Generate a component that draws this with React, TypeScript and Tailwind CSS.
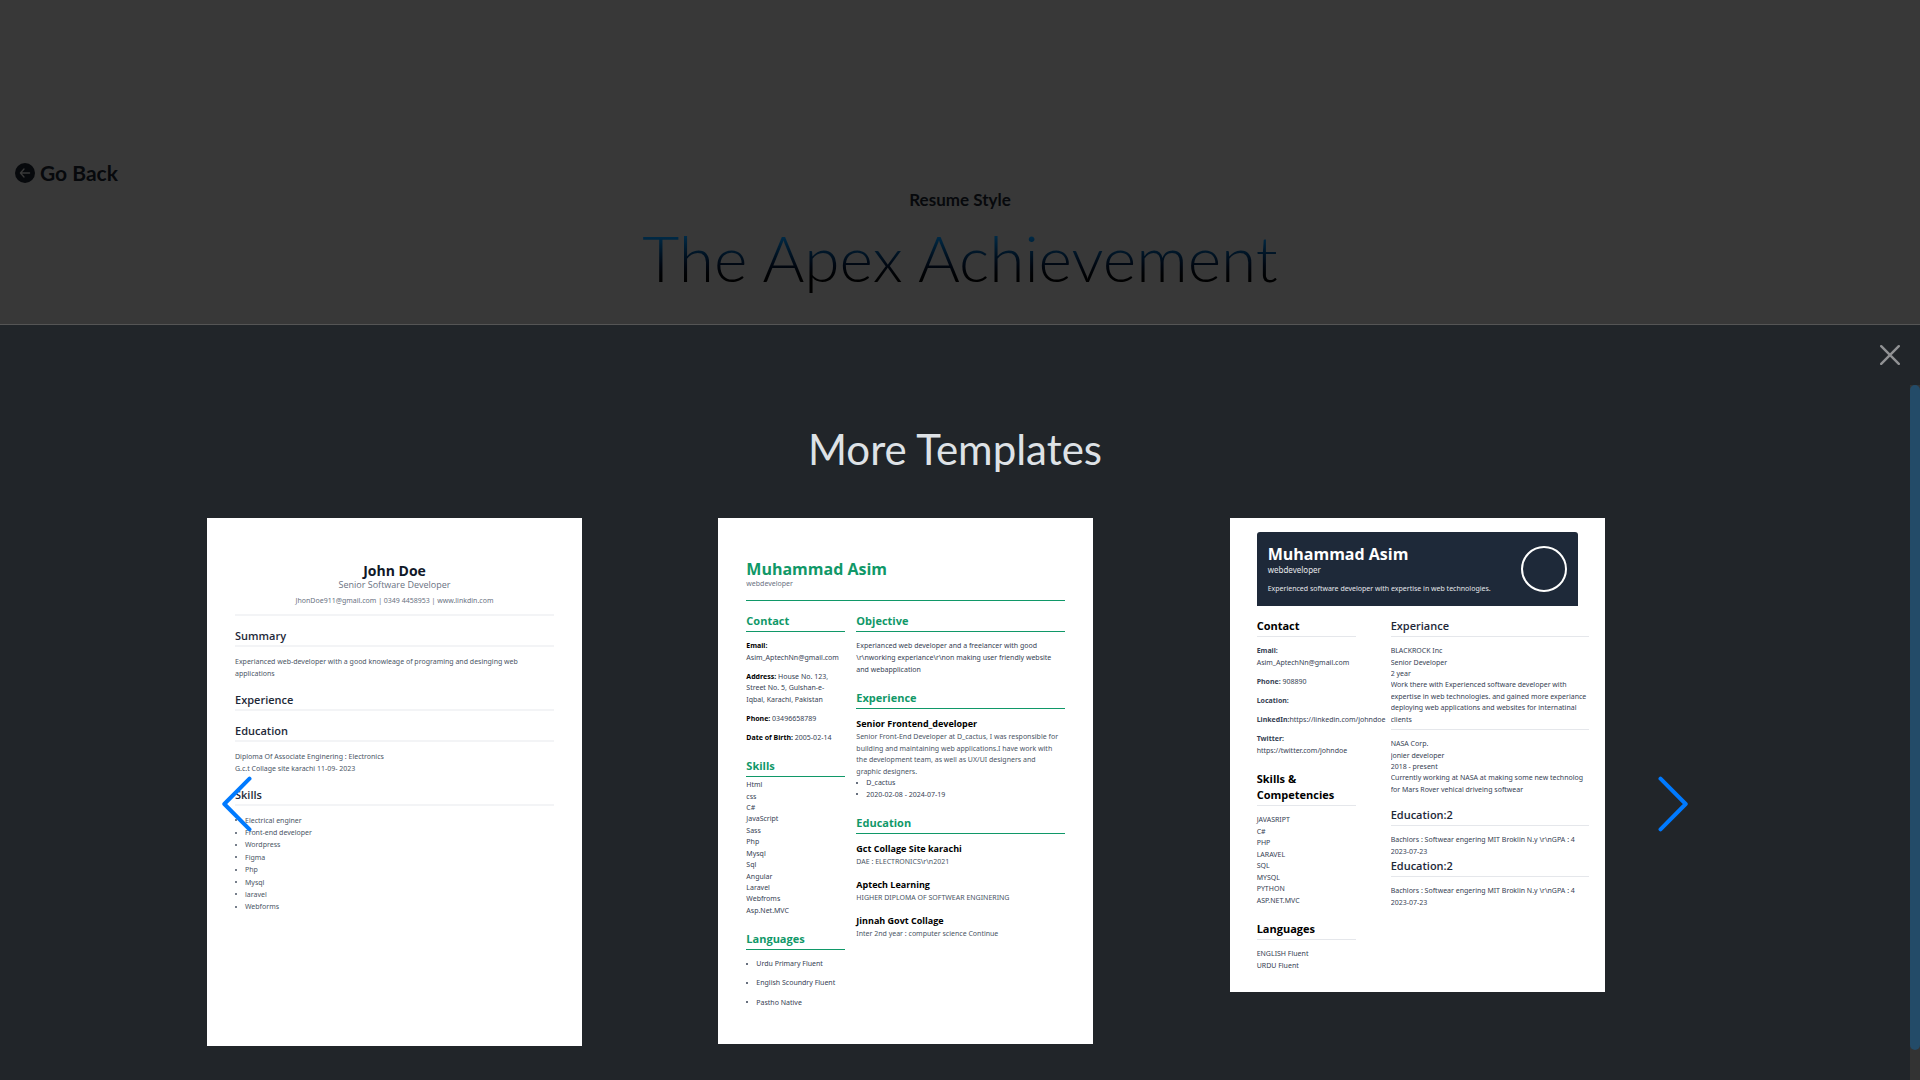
import type { ReactNode } from "react";

function Arrow({ flip }: { flip?: boolean }) {
  return (
    <svg width="32" height="56" viewBox="0 0 32 56" fill="none" aria-hidden="true">
      <path
        d={flip ? "M3.5 2.7 28.7 28 3.5 53.3" : "M28.5 2.7 3.3 28 28.5 53.3"}
        stroke="#007aff"
        strokeWidth="4"
        strokeLinecap="round"
        strokeLinejoin="round"
      />
    </svg>
  );
}

/* A block of equally spaced single lines that share the given height. */
function Lines({ items, className }: { items: ReactNode[]; className: string }) {
  return (
    <div className={`grid auto-rows-fr items-center whitespace-nowrap text-[7px] leading-[11px] ${className}`}>
      {items.map((t, i) => (
        <div key={i}>{t}</div>
      ))}
    </div>
  );
}

function Bullets({ items, className }: { items: string[]; className: string }) {
  return (
    <ul className={`grid auto-rows-fr items-center whitespace-nowrap text-[7px] leading-[11px] ${className}`}>
      {items.map((t) => (
        <li key={t} className="flex items-center gap-2">
          <span className="size-[2px] shrink-0 rounded-full bg-current" />
          {t}
        </li>
      ))}
    </ul>
  );
}

function Heading({ children, className }: { children: ReactNode; className: string }) {
  return <h4 className={`pt-px pb-0.5 font-['Open_Sans',sans-serif] text-[11px] ${className}`}>{children}</h4>;
}

const plainHead = "mt-[11px] border-b-2 border-gray-100 leading-[15px] font-semibold text-gray-800";
const greenHead = "mt-3.5 border-b border-[#109868] leading-[16px] font-bold text-[#109868]";
const blackHead = "mt-3.5 border-b border-gray-200 leading-[16px] font-bold text-black";
const navyHead = "mt-[11px] border-b border-gray-200 leading-[16px] font-semibold text-gray-800";

function ResumeCentered() {
  return (
    <article className="w-full max-w-[375px] bg-white px-7 pt-11 pb-[133px] text-gray-600">
      <header className="border-b-2 border-gray-100 pb-[7px] text-center">
        <h3 className="font-['Open_Sans',sans-serif] text-[14px] leading-[17px] font-bold text-gray-900">John Doe</h3>
        <p className="font-['Open_Sans',sans-serif] text-[9px] leading-[12px] text-gray-500">Senior Software Developer</p>
        <p className="mt-1 text-[7px] leading-[12px] text-gray-500">
          JhonDoe911@gmail.com | 0349 4458953 | www.linkdin.com
        </p>
      </header>
      <Heading className={plainHead}>Summary</Heading>
      <Lines
        className="mt-2 h-[25px]"
        items={["Experianced web-developer with a good knowleage of programing and desinging web", "applications"]}
      />
      <Heading className={plainHead}>Experience</Heading>
      <Heading className={plainHead}>Education</Heading>
      <Lines
        className="mt-2 h-[25px]"
        items={["Diploma Of Associate Enginering : Electronics", "G.c.t Collage site karachi 11-09- 2023"]}
      />
      <Heading className={plainHead}>Skills</Heading>
      <Bullets
        className="mt-2 h-[99px]"
        items={["Electrical enginer", "Front-end developer", "Wordpress", "Figma", "Php", "Mysql", "laravel", "Webforms"]}
      />
    </article>
  );
}

function School({ name, detail }: { name: string; detail: string }) {
  return (
    <div>
      <h5 className="font-['Open_Sans',sans-serif] text-[9px] leading-[14px] font-bold text-black">{name}</h5>
      <p className="text-[7px] leading-[11px] whitespace-nowrap text-gray-600">{detail}</p>
    </div>
  );
}

function ResumeGreen() {
  return (
    <article className="w-full max-w-[375px] bg-white px-7 pt-10 pb-9 text-gray-700">
      <header className="border-b border-[#109868] pb-3">
        <h3 className="font-['Open_Sans',sans-serif] text-[16px] leading-[22px] font-bold text-[#109868]">Muhammad Asim</h3>
        <p className="text-[7px] leading-[8px] text-gray-500">webdeveloper</p>
      </header>
      <div className="-mt-[3px] grid grid-cols-[99px_1fr] gap-[11px]">
        <div>
          <Heading className={greenHead}>Contact</Heading>
          <div className="mt-2 grid gap-2">
            <Lines
              className="h-[23px]"
              items={[<b className="text-black">Email:</b>, "Asim_AptechNn@gmail.com"]}
            />
            <Lines
              className="h-[34px]"
              items={[
                <>
                  <b className="text-black">Address:</b> House No. 123,
                </>,
                "Street No. 5, Gulshan-e-",
                "Iqbal, Karachi, Pakistan",
              ]}
            />
            <p className="text-[7px] leading-[11px]">
              <b className="text-black">Phone:</b> 03496658789
            </p>
            <p className="text-[7px] leading-[11px] whitespace-nowrap">
              <b className="text-black">Date of Birth:</b> 2005-02-14
            </p>
          </div>
          <Heading className={greenHead}>Skills</Heading>
          <Lines
            className="mt-0.5 h-[137px]"
            items={["Html", "css", "C#", "JavaScript", "Sass", "Php", "Mysql", "Sql", "Angular", "Laravel", "Webfroms", "Asp.Net.MVC"]}
          />
          <Heading className={greenHead}>Languages</Heading>
          <Bullets
            className="mt-2 h-[50px] gap-2"
            items={["Urdu Primary Fluent", "English Scoundry Fluent", "Pastho Native"]}
          />
        </div>
        <div>
          <Heading className={greenHead}>Objective</Heading>
          <Lines
            className="mt-2 h-[35px]"
            items={[
              "Experianced web developer and a freelancer with good",
              "\\r\\nworking experiance\\r\\non making user friendly website",
              "and webapplication",
            ]}
          />
          <Heading className={greenHead}>Experience</Heading>
          <h5 className="mt-2 font-['Open_Sans',sans-serif] text-[9px] leading-[14px] font-bold text-black">
            Senior Frontend_developer
          </h5>
          <Lines
            className="h-[46px] text-gray-600"
            items={[
              "Senior Front-End Developer at D_cactus, I was responsible for",
              "building and maintaining web applications.I have work with",
              "the development team, as well as UX/UI designers and",
              "graphic designers.",
            ]}
          />
          <Bullets className="h-[23px]" items={["D_cactus", "2020-02-08 - 2024-07-19"]} />
          <Heading className={greenHead}>Education</Heading>
          <div className="mt-2 grid gap-[11px]">
            <School name="Gct Collage Site karachi" detail="DAE : ELECTRONICS\r\n2021" />
            <School name="Aptech Learning" detail="HIGHER DIPLOMA OF SOFTWEAR ENGINERING" />
            <School name="Jinnah Govt Collage" detail="Inter 2nd year : computer science Continue" />
          </div>
        </div>
      </div>
    </article>
  );
}

function ResumeNavy() {
  const degree = ["Bachlors : Softwear engering MIT Broklin N.y \\r\\nGPA : 4", "2023-07-23"];
  return (
    <article className="w-full max-w-[375px] bg-white pt-3.5 pr-4 pb-[21px] pl-[27px] text-gray-700">
      <header className="mr-[11px] flex h-[74px] items-center justify-between rounded-t-[3px] bg-gray-800 px-[11px] text-white">
        <div>
          <h3 className="font-['Open_Sans',sans-serif] text-[16px] leading-[22px] font-bold">Muhammad Asim</h3>
          <p className="text-[8px] leading-[10px] text-gray-200">webdeveloper</p>
          <p className="mt-2 text-[7px] leading-[12px] whitespace-nowrap text-gray-200">
            Experienced software developer with expertise in web technologies.
          </p>
        </div>
        <div className="size-[46px] rounded-full border-2 border-white" />
      </header>
      <div className="-mt-[3px] grid grid-cols-[99px_1fr] gap-[35px]">
        <div>
          <Heading className={blackHead}>Contact</Heading>
          <div className="mt-2 grid gap-2">
            <Lines className="h-[23px]" items={[<b>Email:</b>, "Asim_AptechNn@gmail.com"]} />
            <p className="text-[7px] leading-[11px]">
              <b>Phone:</b> 908890
            </p>
            <p className="text-[7px] leading-[11px]">
              <b>Location:</b>
            </p>
            <p className="text-[7px] leading-[11px] whitespace-nowrap">
              <b>LinkedIn:</b>https://linkedin.com/johndoe
            </p>
            <Lines className="h-[23px]" items={[<b>Twitter:</b>, "https://twitter.com/johndoe"]} />
          </div>
          <Heading className={blackHead}>Skills &amp; Competencies</Heading>
          <Lines
            className="mt-2 h-[92px]"
            items={["JAVASRIPT", "C#", "PHP", "LARAVEL", "SQL", "MYSQL", "PYTHON", "ASP.NET.MVC"]}
          />
          <Heading className={blackHead}>Languages</Heading>
          <Lines className="mt-2 h-[23px]" items={["ENGLISH Fluent", "URDU Fluent"]} />
        </div>
        <div className="min-w-0 overflow-hidden pt-[3px]">
          <Heading className={navyHead}>Experiance</Heading>
          <Lines
            className="mt-2 h-[80px]"
            items={[
              "BLACKROCK Inc",
              "Senior Developer",
              "2 year",
              "Work there with Experienced software developer with",
              "expertise in web technologies. and gained more experiance",
              "deploying web applications and websites for internatinal",
              "clients",
            ]}
          />
          <hr className="mt-1 border-gray-200" />
          <Lines
            className="mt-2 h-[57px]"
            items={[
              "NASA Corp.",
              "jonier developer",
              "2018 - present",
              "Currently working at NASA at making some new technolog",
              "for Mars Rover vehical driveing softwear",
            ]}
          />
          <Heading className={navyHead}>Education:2</Heading>
          <Lines className="mt-2 h-[23px]" items={degree} />
          <Heading className="border-b border-gray-200 leading-[16px] font-semibold text-gray-800">Education:2</Heading>
          <Lines className="mt-2 h-[23px]" items={degree} />
        </div>
      </div>
    </article>
  );
}

export default function App() {
  return (
    <div className="flex h-screen flex-col overflow-hidden bg-[#383838] font-['Lato',sans-serif]">
      <header className="pt-[159px] pb-7">
        <a href="#back" className="ml-[15px] flex w-fit items-center gap-[5px] text-[21px] leading-7 font-bold text-[#07090c]">
          <svg width="20" height="20" viewBox="0 0 20 20" aria-hidden="true">
            <circle cx="10" cy="10" r="10" fill="#07090c" />
            <path
              d="M14.6 10H5.8M9 6 5.4 10 9 14"
              fill="none"
              stroke="#383838"
              strokeWidth="1.3"
              strokeLinecap="round"
              strokeLinejoin="round"
            />
          </svg>
          Go Back
        </a>
        <div className="text-center">
          <p className="mt-px text-[17px] leading-6 font-bold text-[#07090c]">Resume Style</p>
          <h1 className="mt-2 bg-linear-to-b from-[#002c49] from-20% to-[#000000] to-90% bg-clip-text text-[64px] leading-[76px] font-light text-transparent">
            The Apex Achievement
          </h1>
        </div>
      </header>

      <section className="flex min-h-0 flex-1 flex-col border-t border-[#555555] bg-[#212529]">
        <div className="flex h-[60px] shrink-0 items-start justify-end pt-5 pr-5">
          <button type="button" aria-label="Close">
            <svg width="20" height="20" viewBox="0 0 20 20" stroke="#919294" strokeWidth="2.4" strokeLinecap="round" aria-hidden="true">
              <path d="M1.2 1.2 18.8 18.8M18.8 1.2 1.2 18.8" />
            </svg>
          </button>
        </div>
        <div className="flex min-h-0 flex-1">
          <div className="min-w-0 flex-1 overflow-hidden pt-10">
            <h2 className="text-center text-[42px] leading-[48px] text-[#dee2e6]">More Templates</h2>
            <div className="relative mx-auto mt-[45px] w-full max-w-[1496px]">
              <div className="grid grid-cols-3 items-start gap-[38px] font-['Noto_Sans',sans-serif]">
                <ResumeCentered />
                <ResumeGreen />
                <ResumeNavy />
              </div>
              <button type="button" aria-label="Previous templates" className="absolute top-[258px] left-3.5">
                <Arrow />
              </button>
              <button type="button" aria-label="Next templates" className="absolute top-[258px] right-3.5">
                <Arrow flip />
              </button>
            </div>
          </div>
          <div className="w-2.5 shrink-0 bg-[#333333] pb-[30px]">
            <div className="h-full rounded-full bg-[#234b68]" />
          </div>
        </div>
      </section>
    </div>
  );
}
